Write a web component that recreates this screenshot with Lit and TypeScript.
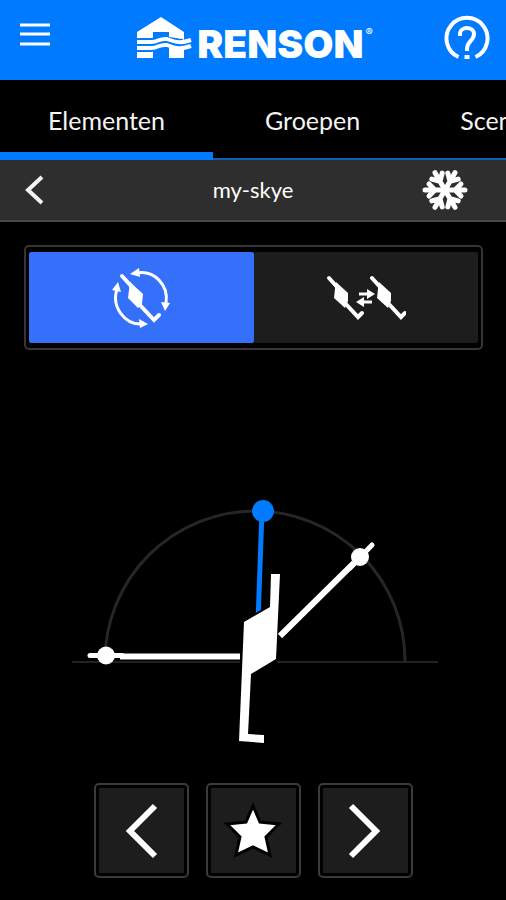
import { LitElement, html, css, svg } from "lit";
import { customElement, state } from "lit/decorators.js";

@customElement("app-root")
export class AppRoot extends LitElement {
  @state() private tab = "Elementen";
  @state() private mode = "rotate";

  static styles = css`
    :host {
      display: flex;
      flex-direction: column;
      min-height: 100vh;
      background: #000;
      color: #fff;
      font-family: Lato, "Open Sans", sans-serif;
      overflow: hidden;
    }
    button {
      margin: 0;
      padding: 0;
      border: 0;
      background: none;
      color: inherit;
      font: inherit;
      cursor: pointer;
    }
    svg {
      display: block;
    }
    .top {
      display: grid;
      grid-template-columns: 1fr auto 1fr;
      align-items: center;
      height: 80px;
      padding: 0 16px 4px 20px;
      box-sizing: border-box;
      background: #007aff;
    }
    .menu {
      justify-self: start;
      padding-bottom: 6px;
    }
    .help {
      justify-self: end;
    }
    .brand {
      display: flex;
      align-items: center;
      gap: 5px;
      color: #fff;
      text-decoration: none;
    }
    .word {
      display: flex;
      align-items: flex-start;
      gap: 2px;
      padding-top: 12px;
      font: 900 39px/40px Inter, sans-serif;
    }
    .mark {
      font: 400 11px/16px Inter, sans-serif;
    }
    .tabs {
      display: flex;
      gap: 4px;
      height: 80px;
      box-sizing: border-box;
      overflow: hidden;
      box-shadow: inset 0 -2px #0d62b8;
    }
    .tab {
      flex: none;
      padding: 0 48px;
      border-top: 8px solid transparent;
      border-bottom: 8px solid transparent;
      font-size: 25px;
      line-height: 64px;
      color: #f4f4f4;
    }
    .tab.active {
      border-bottom-color: #007aff;
    }
    .titlebar {
      display: grid;
      grid-template-columns: 1fr auto 1fr;
      align-items: center;
      height: 62px;
      box-sizing: border-box;
      padding: 0 24px;
      background: #2e2e2e;
      border-bottom: 2px solid #484848;
    }
    .title {
      margin: 0;
      font-size: 22px;
      line-height: 32px;
      font-weight: 400;
    }
    .back {
      justify-self: start;
    }
    .season {
      justify-self: end;
      padding-right: 14px;
    }
    .modes {
      display: flex;
      margin: 23px 23px 0 24px;
      padding: 5px 3px;
      height: 105px;
      box-sizing: border-box;
      border: 2px solid #353535;
      border-radius: 5px;
    }
    .mode {
      flex: 1;
      display: flex;
      align-items: center;
      justify-content: center;
      background: #1d1d1d;
      border-radius: 2px;
    }
    .mode.active {
      background: #3570fa;
    }
    .dial {
      flex: 1;
      display: flex;
      flex-direction: column;
      justify-content: flex-end;
      padding: 32px 0 33px;
    }
    .dial svg {
      width: 100%;
      height: 260px;
    }
    .controls {
      display: flex;
      justify-content: center;
      gap: 17px;
      padding-bottom: 22px;
    }
    .control {
      display: flex;
      align-items: center;
      justify-content: center;
      width: 95px;
      height: 95px;
      padding: 3px;
      box-sizing: border-box;
      border: 2px solid #3a3a3a;
      border-radius: 5px;
      background: #1d1d1d content-box;
    }
  `;

  private arm(angle: number) {
    return svg`<path transform="rotate(${angle} 23 23)" d="M23 23 V3 M23 13 L17 7 M23 13 L29 7"/>`;
  }

  private slat(x: number) {
    return svg`<g transform="translate(${x} 0)">
      <path d="M3 3 L12 13 M18 27 L32 42 L36 38" stroke-width="4" stroke-linecap="round"/>
      <path fill="#fff" stroke="none" d="M10 7 L22 18 L22 26 L19 33 L8 23 L9 14 Z"/>
    </g>`;
  }

  render() {
    return html`
      <header class="top">
        <button class="menu" aria-label="Menu">
          <svg width="30" height="24" viewBox="0 0 30 24" stroke="#fff" stroke-width="3">
            <path d="M0 2 H30 M0 11 H30 M0 21 H30"/>
          </svg>
        </button>
        <a class="brand" href="#">
          <svg width="55" height="42" viewBox="0 0 55 42" fill="none">
            <path fill="#fff" d="M0 15 L24 0 L47 15 V41 H32 V15 H16 V41 H0 Z"/>
            <path stroke="#007aff" stroke-width="14" d="M-1 28 H14 C22 28 22 24 30 25 C40 29 45 29 48 28"/>
            <g stroke="#fff" stroke-width="4">
              <path d="M0 25 H14 C22 25 22 21 30 22 C40 26 45 26 54 23"/>
              <path d="M0 31 H14 C22 31 22 27 30 28 C40 32 45 32 54 29"/>
            </g>
            <path fill="#fff" d="M0 35 H16 V41 H0 Z M32 30 L47 33 V41 H32 Z M32 15 H47 V22 L32 20 Z"/>
          </svg>
          <span class="word">RENSON<span class="mark">®</span></span>
        </a>
        <button class="help" aria-label="Help">
          <svg width="46" height="46" viewBox="0 0 46 46" fill="none" stroke="#fff" stroke-width="4">
            <path d="M14.500 42 A20.500 20.500 0 1 1 31.500 42"/>
            <path d="M16 21 V19 C16 11 30 11 30 19 C30 26 23 26 23 34 V36"/>
            <path d="M20.500 42 H25.500"/>
          </svg>
        </button>
      </header>

      <nav class="tabs" role="tablist">
        ${["Elementen", "Groepen", "Scenes"].map(
          (name) => html`<button
            class="tab ${this.tab === name ? "active" : ""}"
            role="tab"
            aria-selected=${this.tab === name}
            @click=${() => (this.tab = name)}
          >${name}</button>`
        )}
      </nav>

      <section class="titlebar">
        <button class="back" aria-label="Terug">
          <svg width="20" height="30" viewBox="0 0 20 30" fill="none" stroke="#f4f4f4" stroke-width="4">
            <path d="M18 2 L4 15 L18 28"/>
          </svg>
        </button>
        <h1 class="title">my-skye</h1>
        <button class="season" aria-label="Winter">
          <svg width="46" height="46" viewBox="0 0 46 46" fill="none" stroke="#fff" stroke-width="5" stroke-linecap="round">
            ${[30, 90, 150, 210, 270, 330].map((a) => this.arm(a))}
          </svg>
        </button>
      </section>

      <div class="modes">
        <button
          class="mode ${this.mode === "rotate" ? "active" : ""}"
          aria-label="Kantelen"
          aria-pressed=${this.mode === "rotate"}
          @click=${() => (this.mode = "rotate")}
        >
          <svg width="58" height="62" viewBox="0 0 58 62" fill="none" stroke="#fff" stroke-width="3">
            <path d="M25 6 C42 3 57 18 54 36"/>
            <path d="M5 22 C-1 40 13 58 30 57"/>
            <g fill="#fff" stroke="none">
              <path d="M18 7 L27 1 L28 10 Z"/>
              <path d="M53 44 L49 35 L58 36 Z"/>
              <path d="M6 15 L0 23 L9 25 Z"/>
              <path d="M36 57 L27 52 L28 61 Z"/>
              <path d="M18 15 L31 27 L30 37 L26 41 L16 31 L17 23 Z"/>
            </g>
            <path d="M10 9 L20 20 M26 36 L42 53 L47 48" stroke-width="4" stroke-linecap="round"/>
          </svg>
        </button>
        <button
          class="mode ${this.mode === "slide" ? "active" : ""}"
          aria-label="Schuiven"
          aria-pressed=${this.mode === "slide"}
          @click=${() => (this.mode = "slide")}
        >
          <svg width="80" height="46" viewBox="0 0 80 46" fill="none" stroke="#fff" stroke-width="4">
            ${[0, 43].map((x) => this.slat(x))}
            <path d="M33 19 H42 M36 27 H46" stroke-width="3"/>
            <path fill="#fff" stroke="none" d="M41 14 L49 19 L41 24 Z M38 22 L30 27 L38 32 Z"/>
          </svg>
        </button>
      </div>

      <main class="dial">
        <svg viewBox="0 0 506 260" fill="none" role="img" aria-label="Stand van de lamellen">
          <path d="M105 171 A150 150 0 0 1 405 171" stroke="#262626" stroke-width="3"/>
          <path d="M72 172 H240 M277 172 H438" stroke="#222" stroke-width="2"/>
          <path d="M120 166.500 H240" stroke="#fff" stroke-width="6"/>
          <path d="M90 165.500 H122" stroke="#fff" stroke-width="5" stroke-linecap="round"/>
          <circle cx="106" cy="165.500" r="9" fill="#fff"/>
          <path d="M280 146 L354 73" stroke="#fff" stroke-width="6"/>
          <path d="M350 78 L372 55" stroke="#fff" stroke-width="5" stroke-linecap="round"/>
          <circle cx="360" cy="67" r="9" fill="#fff"/>
          <path d="M262 20 L258 132" stroke="#007aff" stroke-width="5"/>
          <circle cx="263" cy="21" r="11" fill="#007aff"/>
          <path stroke="#000" stroke-width="4" d="M244 132 L270 117"/>
          <path fill="#fff" d="M271 84 H280 L276 169 L251 184 L248 244 L264 245 V253 L239 251 L244 132 L270 117 Z"/>
        </svg>
      </main>

      <footer class="controls">
        <button class="control" aria-label="Vorige">
          <svg width="34" height="56" viewBox="0 0 34 56" fill="none" stroke="#fff" stroke-width="6">
            <path d="M31 3 L6 28 L31 53"/>
          </svg>
        </button>
        <button class="control" aria-label="Favoriet">
          <svg width="60" height="60" viewBox="0 0 60 60">
            <path fill="#fff" stroke="#000" stroke-width="3" d="M30 5 L37 21 L56 23 L43 36 L47 54 L30 46 L13 54 L17 36 L4 23 L23 21 Z"/>
          </svg>
        </button>
        <button class="control" aria-label="Volgende">
          <svg width="34" height="56" viewBox="0 0 34 56" fill="none" stroke="#fff" stroke-width="6">
            <path d="M3 3 L28 28 L3 53"/>
          </svg>
        </button>
      </footer>
    `;
  }
}
